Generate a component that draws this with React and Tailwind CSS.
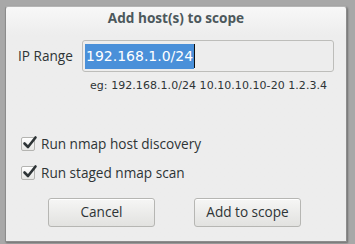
function CheckRow({ label }) {
  return (
    <div className="flex items-center h-[20px]">
      <div className="relative w-[14px] h-[14px] ml-[15px]">
        <div className="absolute inset-0 rounded-[2px] border border-[#b4b4b1] bg-gradient-to-b from-[#ffffff] to-[#e6e6e4]"></div>
        <svg className="absolute left-[1px] top-[-2px]" width="16" height="15" viewBox="0 0 16 15">
          <path d="M2.5 8.5 L6 12 L13.5 2.5" fill="none" stroke="#2e3436" strokeWidth="2.6" strokeLinecap="round" strokeLinejoin="round" />
        </svg>
      </div>
      <span className="ml-[6px] text-[13.6px] text-[#2e3436] font-['Open_Sans',sans-serif]">{label}</span>
    </div>
  );
}

function DialogButton({ children }) {
  return (
    <button className="w-[107px] h-[29px] rounded-[3px] border border-[#b6b6b3] bg-gradient-to-b from-[#f6f6f5] to-[#e2e2e0] text-[13.6px] text-[#2e3436] font-['Open_Sans',sans-serif] shadow-[inset_0_1px_0_#ffffff]">
      {children}
    </button>
  );
}

export default function App() {
  return (
    <div className="w-[355px] h-[244px] bg-[#a8a8a8] pt-[6px] pl-[5px] overflow-hidden">
      <div className="w-[342px] h-[236px] border border-[#8c8c8c] border-t-[#b5b5b5] rounded-t-[3px] bg-gradient-to-b from-[#f8f8f8] via-[#ededed] via-[12%] to-[#ededed] shadow-[1px_1px_2px_rgba(0,0,0,0.35)] flex flex-col">
        <div className="h-[22px] flex items-center justify-center text-[13.6px] font-bold text-[#4c585c] font-['Open_Sans',sans-serif] pt-[1px]">
          Add host(s) to scope
        </div>

        <div className="flex items-center mt-[11px]">
          <span className="ml-[12px] w-[64px] text-[13.6px] text-[#2e3436] font-['Open_Sans',sans-serif]">IP Range</span>
          <div className="w-[252px] h-[32px] rounded-[3px] border border-[#bdbdba] bg-[#ededed] flex items-center pl-[2px]">
            <span className="bg-[#4a90d9] text-white text-[14px] leading-[25px] px-[1px] font-['DejaVu_Sans',sans-serif]">
              192.168.1.0/24
            </span>
            <span className="w-[1px] h-[24px] bg-[#111111]"></span>
          </div>
        </div>

        <div className="ml-[84px] mt-[6px] text-[11px] text-[#2e3436] font-['DejaVu_Sans',sans-serif] leading-[15px] tracking-[0.05px]">
          eg: 192.168.1.0/24 10.10.10.10-20 1.2.3.4
        </div>

        <div className="mt-[41px] flex flex-col gap-[9px]">
          <CheckRow label="Run nmap host discovery" />
          <CheckRow label="Run staged nmap scan" />
        </div>

        <div className="mt-[15px] flex pl-[42px] gap-[39px]">
          <DialogButton>Cancel</DialogButton>
          <DialogButton>Add to scope</DialogButton>
        </div>
      </div>
    </div>
  );
}
